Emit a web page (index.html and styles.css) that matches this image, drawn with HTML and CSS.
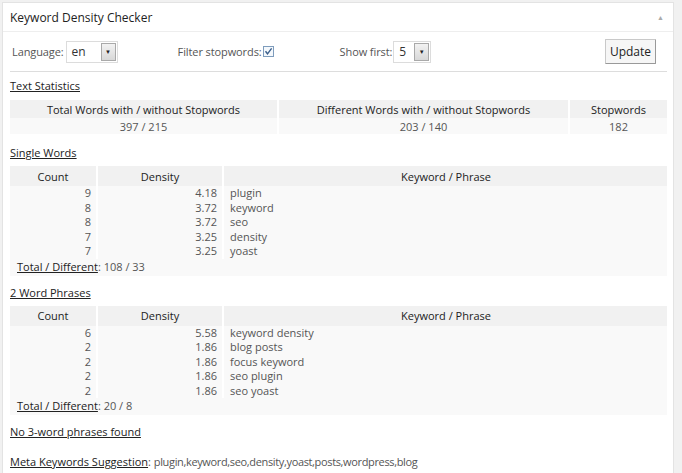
FILE: index.html
```html
<!DOCTYPE html>
<html>
<head>
<meta charset="utf-8">
<link rel="stylesheet" href="styles.css">
</head>
<body>
<div class="panel">
  <div class="head">
    <span class="title">Keyword Density Checker</span>
    <span class="toggle">▲</span>
  </div>
  <div class="inside">
    <div class="controls">
      <div class="grp g1">
        <span class="lbl">Language:</span>
        <span class="sel sel-lang"><span class="val">en</span><span class="btn">▼</span></span>
      </div>
      <div class="grp g2">
        <span class="lbl">Filter stopwords:</span>
        <span class="chk"><svg width="11" height="11" viewBox="0 0 11 11"><rect x="0.5" y="0.5" width="10" height="10" fill="#f4f8fc" stroke="#7e9cbc"/><path d="M2.5 5.2 L4.5 7.8 L8.6 2.4" fill="none" stroke="#3b5f8c" stroke-width="1.4"/></svg></span>
      </div>
      <div class="grp g3">
        <span class="lbl">Show first:</span>
        <span class="sel sel-num"><span class="val">5</span><span class="btn">▼</span></span>
      </div>
      <button class="update">Update</button>
    </div>

    <h4 class="sec s1">Text Statistics</h4>
    <table class="stats">
      <tr><th class="c1">Total Words with / without Stopwords</th><th class="c2">Different Words with / without Stopwords</th><th class="c3">Stopwords</th></tr>
      <tr><td>397 / 215</td><td>203 / 140</td><td>182</td></tr>
    </table>

    <h4 class="sec s2">Single Words</h4>
    <table class="words">
      <tr class="hr"><th class="wc">Count</th><th class="wd">Density</th><th class="wk">Keyword / Phrase</th></tr>
      <tr><td class="n">9</td><td class="n">4.18</td><td class="k">plugin</td></tr>
      <tr><td class="n">8</td><td class="n">3.72</td><td class="k">keyword</td></tr>
      <tr><td class="n">8</td><td class="n">3.72</td><td class="k">seo</td></tr>
      <tr><td class="n">7</td><td class="n">3.25</td><td class="k">density</td></tr>
      <tr><td class="n">7</td><td class="n">3.25</td><td class="k">yoast</td></tr>
      <tr class="tot"><td colspan="3"><u>Total / Different</u>: 108 / 33</td></tr>
    </table>

    <h4 class="sec s3">2 Word Phrases</h4>
    <table class="words">
      <tr class="hr"><th class="wc">Count</th><th class="wd">Density</th><th class="wk">Keyword / Phrase</th></tr>
      <tr><td class="n">6</td><td class="n">5.58</td><td class="k">keyword density</td></tr>
      <tr><td class="n">2</td><td class="n">1.86</td><td class="k">blog posts</td></tr>
      <tr><td class="n">2</td><td class="n">1.86</td><td class="k">focus keyword</td></tr>
      <tr><td class="n">2</td><td class="n">1.86</td><td class="k">seo plugin</td></tr>
      <tr><td class="n">2</td><td class="n">1.86</td><td class="k">seo yoast</td></tr>
      <tr class="tot"><td colspan="3"><u>Total / Different</u>: 20 / 8</td></tr>
    </table>

    <h4 class="sec s4">No 3-word phrases found</h4>

    <p class="meta"><u>Meta Keywords Suggestion</u>: <span class="kw">plugin,keyword,seo,density,yoast,posts,wordpress,blog</span></p>
  </div>
</div>
</body>
</html>
```

FILE: styles.css
```css
html, body {
  margin: 0;
  padding: 0;
}
body {
  background: #f1f1f1;
  padding: 2px 0 0 2px;
  font-family: "Open Sans", "Liberation Sans", sans-serif;
  font-size: 11px;
  color: #555;
  height: 473px;
  box-sizing: border-box;
  overflow: hidden;
}
.panel {
  width: 670px;
  background: #fff;
  border: 1px solid #e3e3e3;
  min-height: 480px;
}
.head {
  height: 28px;
  border-bottom: 1px solid #eeeeee;
  display: flex;
  align-items: center;
  padding: 0 9px 0 7px;
}
.title {
  font-size: 12px;
  color: #222;
  flex: 1;
}
.toggle {
  font-size: 7px;
  color: #aaa;
}
.inside {
  padding: 0 6px 0 7px;
}
.controls {
  display: flex;
  align-items: center;
  height: 39px;
  border-bottom: 1px solid #dddddd;
  padding: 0 11px 0 2px;
  color: #555;
}
.grp {
  display: flex;
  align-items: center;
}
.lbl {
  font-size: 11px;
  letter-spacing: -0.1px;
}
.g1 .lbl { margin-right: 2px; }
.g2 { margin-left: 60px; }
.g2 .lbl { margin-right: 1px; }
.g3 { margin-left: 66px; }
.g3 .lbl { margin-right: 1px; }
.sel {
  display: flex;
  height: 22px;
  border: 1px solid #dcdcdc;
  box-sizing: border-box;
  background: #fff;
}
.sel-lang { width: 52px; }
.sel-num { width: 38px; }
.sel .val {
  flex: 1;
  padding-left: 5px;
  font-size: 12px;
  color: #333;
  line-height: 20px;
}
.sel .btn {
  width: 13px;
  margin: 1px;
  border: 1px solid #a9a9a9;
  background: linear-gradient(#f2f2f2, #d8d8d8);
  font-size: 6px;
  color: #222;
  display: flex;
  align-items: center;
  justify-content: center;
}
.chk {
  display: flex;
  width: 11px;
  height: 11px;
}
.update {
  margin-left: auto;
  font-family: "Open Sans", "Liberation Sans", sans-serif;
  font-size: 12px;
  color: #222;
  background: #f6f6f6;
  border: 1px solid #c9c9c9;
  border-right-color: #999;
  border-bottom-color: #999;
  width: 51px;
  height: 25px;
  padding: 0;
  border-radius: 1px;
}
.sec {
  margin: 0;
  font-size: 11px;
  font-weight: 400;
  color: #222;
  text-decoration: underline;
  line-height: 14px;
}
.s1 { padding-top: 7px; }
.s2 { padding-top: 12px; }
.s3 { padding-top: 10px; }
.s4 { padding-top: 10px; }
table {
  border-collapse: separate;
  border-spacing: 2px 0;
  margin: 0 -2px;
  width: calc(100% + 4px);
  font-size: 11px;
}
th {
  font-weight: 400;
  color: #222;
  background: #f1f1f1;
  padding: 0;
  text-align: center;
}
td {
  background: #f9f9f9;
  padding: 0;
  color: #555;
}
.stats { margin-top: 7px; }
.stats th { height: 18px; }
.stats td {
  text-align: center;
  height: 16px;
}
.stats .c1 { width: 267px; }
.stats .c2 { width: 289px; }
.words { margin-top: 6px; }
.words th { height: 20px; }
.words .wc { width: 86px; }
.words .wd { width: 124px; }
.words .wk { text-align: left; padding-left: 177px; }
.words td { height: 14.5px; line-height: 14px; }
.words td.n { text-align: right; padding-right: 5px; }
.words td.k { padding-left: 6px; }
.words .tot td { padding-left: 7px; padding-top: 1px; padding-bottom: 2px; height: 14px; }
.words .tot u { color: #222; }
.meta {
  margin: 16px 0 0;
  color: #555;
  line-height: 14px;
}
.meta u { color: #222; }
.meta .kw { letter-spacing: -0.35px; }
```
